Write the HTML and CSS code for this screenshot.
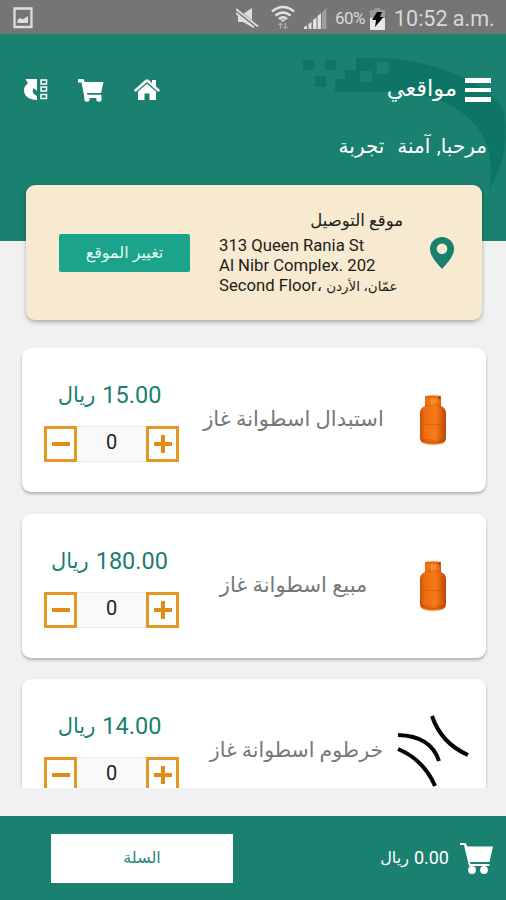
FILE: index.html
```html
<!DOCTYPE html>
<html lang="ar">
<head>
<meta charset="utf-8">
<title>مواقعي</title>
<link rel="stylesheet" href="styles.css">
</head>
<body>
<svg class="defs" width="0" height="0">
  <defs>
    <linearGradient id="tank" x1="0" x2="1" y1="0" y2="0">
      <stop offset="0" stop-color="#c85007"/><stop offset=".18" stop-color="#ee6d12"/>
      <stop offset=".6" stop-color="#f87b18"/><stop offset="1" stop-color="#bd4705"/>
    </linearGradient>
    <symbol id="cylinder" viewBox="0 0 26 50">
      <path fill="url(#tank)" d="M5 1q8-1.500 16 0v10q5 2 5 7v25q0 4-4 5.500-9 2.500-18 0-4-1.500-4-5.500V18q0-5 5-7z"/>
      <path d="M5 1.500q8 1 16 0M5 11q8-2 16 0M.5 29q12 1.500 25 0M1 44q12 3 24 0" fill="none" stroke="#b64404" stroke-width=".8" opacity=".45"/>
      <path d="M12 3v7M15 4v4" stroke="#ffb574" stroke-width="1.400" opacity=".6"/>
      <path d="M1.500 45q11 5 23 0" fill="none" stroke="#9c3a05" stroke-width="1" opacity=".6"/>
      <circle cx="19.500" cy="2.800" r="1" fill="#7d3512"/>
    </symbol>
  </defs>
</svg>

<div class="statusbar">
  <svg class="sb-photo" width="20" height="22" viewBox="0 0 20 22"><path d="M1.500 1.500h17v18.500h-17z" fill="none" stroke="#dedede" stroke-width="2.300"/><path d="M4.500 16v-3l3-2 2 1.500 5.500-3.500v7z" fill="#dedede"/></svg>
  <svg class="sb-mute" width="24" height="22" viewBox="0 0 24 22"><path d="M2 7h5l9-6v19l-9-5H2z" fill="#dedede"/><path d="M0 3.500l21 17" stroke="#757575" stroke-width="5"/><path d="M0 2l22 17.500M0 6l18 14.500" stroke="#dedede" stroke-width="1.800"/></svg>
  <svg class="sb-wifi" width="24" height="25" viewBox="0 0 24 25"><g fill="none" stroke="#e2e2e2" stroke-width="2.500"><path d="M1 6.500q11-9 22 0M4.500 10.500q7.500-6 15 0M8 14q4-3.500 8 0"/></g><path d="M9 14.500h6l-3 2.500z" fill="#e2e2e2"/><path d="M9.500 24v-6M7.500 20l2-2 2 2M14.500 17.500v6M12.500 21.500l2 2 2-2" fill="none" stroke="#adadad" stroke-width="1.200"/></svg>
  <svg class="sb-signal" width="23" height="22" viewBox="0 0 23 22"><path d="M0 21v-2l3-1.500V21zM4.500 21v-5l3-2v7zM9 21v-9l3.500-2.500V21zM13.500 21V8L17 5v16z" fill="#e2e2e2"/><path d="M18 21V4.500L22.500 0v21z" fill="#a0a0a0"/></svg>
  <span class="sb-percent">60%</span>
  <svg class="sb-battery" width="15" height="22" viewBox="0 0 15 22"><path d="M4.500 0h6v2H15v20H0V2h4.500z" fill="#999"/><path d="M0 10h15v12H0z" fill="#e8e8e8"/><path d="M7 4h5L10 9h3.500L5 19l1-7H2z" fill="#080808"/></svg>
  <span class="sb-time">10:52 a.m.</span>
</div>

<header class="header">
  <svg class="decor" width="206" height="180" viewBox="300 34 206 180"><g fill="#0d7566"><path d="M356 58Q412 56 455 74 492 88 504 112 511 154 489 190 496 152 477 127 448 92 390 92h-55V79h10v-9h11z"/><path d="M303 60h11v10h-11zM325 60h11v10h-11zM315 76h11v11h-11z"/></g><g fill="#1b806f"><path d="M360 71h12v11h-12zM377 62h12v12h-12z"/></g></svg>
  <div class="toolbar">
    <div class="actions">
      <svg width="24" height="22" viewBox="0 0 24 22"><path d="M1.500 0H13v12L9.500 9Q7 14.500 13 17v4Q0 20 0 11 0 7 4 4.500z" fill="#fff"/><path d="M17 1h5.500v4H17zM17 8h5.500v4H17zM17 15.500h5.500v4H17z" fill="none" stroke="#fff" stroke-width="1.500"/></svg>
      <svg width="26" height="23" viewBox="0 0 26 23"><path d="M0 0h5.500l1.200 3H25.500L23 14H9l.3 1.700h14V19H6.500L3.500 3.500H0z" fill="#fff"/><circle cx="9" cy="20" r="2.700" fill="#fff"/><circle cx="21" cy="20" r="2.700" fill="#fff"/></svg>
      <svg width="26" height="22" viewBox="0 0 26 22"><path d="M0 11 11.500.8q1.500-1.200 3 0L18 4V1h4v6.500l4 3.500-1.600 2L13 3 1.600 13z" fill="#fff"/><path d="M4 12.500 13 4.800l9 7.700V21h-6.500v-6.500h-5V21H4z" fill="#fff"/></svg>
    </div>
    <h1 class="title" dir="rtl">مواقعي</h1>
    <div class="burger"><i></i><i></i><i></i></div>
  </div>
  <p class="greeting" dir="rtl">مرحبا, آمنة&nbsp; تجربة</p>
</header>

<section class="address">
  <button class="change" dir="rtl">تغيير الموقع</button>
  <div class="place">
    <h2 class="place-title" dir="rtl">موقع التوصيل</h2>
    <p>313 Queen Rania St</p>
    <p>Al Nibr Complex. 202</p>
    <p class="mixed"><span>Second Floor،</span><span class="city" dir="rtl">عمّان، الأردن</span></p>
  </div>
  <svg class="pin" width="24" height="32" viewBox="0 0 24 32"><path fill="#18806e" fill-rule="evenodd" d="M12 0a12 12 0 0 1 12 12c0 7-6 13-12 20C6 25 0 19 0 12A12 12 0 0 1 12 0zm0 6.500a5.300 5.300 0 1 0 0 10.600 5.300 5.300 0 0 0 0-10.600z"/></svg>
</section>

<main class="list">
  <article class="item">
    <div class="buy">
      <div class="price"><span class="cur">ريال</span><span>15.00</span></div>
      <div class="stepper"><button class="step minus"></button><span>0</span><button class="step plus"></button></div>
    </div>
    <h3 class="name" dir="rtl">استبدال اسطوانة غاز</h3>
    <div class="thumb"><svg width="26" height="50"><use href="#cylinder"/></svg></div>
  </article>
  <article class="item">
    <div class="buy">
      <div class="price"><span class="cur">ريال</span><span>180.00</span></div>
      <div class="stepper"><button class="step minus"></button><span>0</span><button class="step plus"></button></div>
    </div>
    <h3 class="name" dir="rtl">مبيع اسطوانة غاز</h3>
    <div class="thumb"><svg width="26" height="50"><use href="#cylinder"/></svg></div>
  </article>
  <article class="item">
    <div class="buy">
      <div class="price"><span class="cur">ريال</span><span>14.00</span></div>
      <div class="stepper"><button class="step minus"></button><span>0</span><button class="step plus"></button></div>
    </div>
    <h3 class="name hose" dir="rtl">خرطوم اسطوانة غاز</h3>
    <div class="thumb"><svg width="72" height="72" viewBox="0 0 72 72"><g fill="none" stroke="#050505" stroke-width="4"><path d="M35 1q9 27 36 39M1 34q26 11 37 37"/><path d="M1 20q33 1 41 26"/></g></svg></div>
  </article>
</main>

<footer class="footer">
  <button class="basket" dir="rtl">السلة</button>
  <div class="total"><span class="cur">ريال</span><span>0.00</span></div>
  <svg class="cart" width="33" height="31" viewBox="0 0 33 31"><path d="M0 0h5.500l2 3.500H33L29.500 19H10l.5 2h19v2H9L4 2H0z" fill="#fff"/><circle cx="12" cy="27" r="3.900" fill="#fff"/><circle cx="24" cy="27" r="3.900" fill="#fff"/></svg>
</footer>
</body>
</html>
```
FILE: styles.css
```css
* { box-sizing: border-box; margin: 0; padding: 0; }
html, body { height: 900px; overflow: hidden; }
body {
  width: 506px;
  background: #f1f1f1;
  font-family: Roboto, "DejaVu Sans", sans-serif;
  display: flex;
  flex-direction: column;
}
h1, h2, h3 { font-weight: 400; white-space: nowrap; }
p { white-space: nowrap; }
button { border: 0; font: inherit; }
svg { display: block; flex: none; }
.defs { position: absolute; }

.statusbar { height: 34px; flex: none; background: #757575; color: #d9d9d9; display: flex; align-items: center; padding: 0 11px 0 13px; }
.sb-photo { margin-top: 1px; }
.sb-mute { margin: 2px 0 0 auto; }
.sb-wifi { margin-left: 11px; }
.sb-signal { margin: 3px 0 0 9px; }
.sb-percent { font-size: 17px; margin: 2px 0 0 8px; width: 31px; letter-spacing: -.5px; }
.sb-battery { margin: 3px 0 0 4px; }
.sb-time { font-size: 21.500px; width: 101px; margin: 3px 0 0 9px; white-space: nowrap; }

.header { position: relative; height: 207px; flex: none; background: #1a806f; color: #fff; padding-top: 34px; }
.decor { position: absolute; right: 0; top: 0; }
.toolbar { position: relative; display: flex; align-items: center; height: 44px; padding: 0 15px 0 24px; }
.actions { display: flex; align-items: center; gap: 30px; flex: 1; }
.title { font-size: 22.500px; line-height: 30px; margin-top: -5px; }
.burger { width: 26px; margin-left: 8px; display: grid; gap: 5px; }
.burger i { height: 4.500px; background: #fff; }
.greeting { position: relative; font-size: 20px; line-height: 24px; padding-right: 19px; margin-top: 22px; word-spacing: 1.500px; }

.address { position: relative; flex: none; width: 456px; height: 135px; margin: -56px 0 0 26px; background: #f7ead0; border-radius: 9px; box-shadow: 0 2px 4px rgba(0,0,0,.3); display: flex; align-items: center; padding: 0 28px 0 33px; }
.change { width: 131px; height: 38px; background: #1ba38b; color: #e4f8f3; border-radius: 2px; font-size: 16px; }
.place { width: 184px; margin: 1px 0 0 29px; font-size: 16.700px; line-height: 20px; color: #1c1c1a; }
.place-title { font-size: 16.500px; line-height: 22px; height: 26px; }
.mixed { display: flex; }
.city { font-size: 13.500px; margin-left: 4px; }
.pin { margin-left: auto; }

.list { flex: none; height: 448px; width: 474px; margin: 20px 0 0 17px; padding: 8px 5px 0; overflow: hidden; }
.item { width: 464px; height: 144px; margin-bottom: 21.500px; background: #fff; border-radius: 9px; box-shadow: 0 2px 3px rgba(0,0,0,.27); display: flex; align-items: center; padding: 0 17px 0 22px; }
.buy { width: 135px; align-self: flex-start; padding-top: 30px; }
.price { display: flex; justify-content: center; gap: 7px; font-size: 23.500px; line-height: 34px; height: 48px; color: #1c7f6d; padding-right: 4px; }
.price .cur { font-size: 21px; }
.stepper { display: flex; height: 36px; }
.stepper span { flex: 1; text-align: center; font-size: 20px; line-height: 30px; background: #f9f9f9; border: solid #eee; border-width: 1px 0; color: #222; }
.step { width: 33px; height: 36px; border: 3px solid #e39826; background: linear-gradient(#e38c15,#e38c15) center / 18px 4px no-repeat #fff; }
.plus { background: linear-gradient(#e38c15,#e38c15) center / 18px 4px no-repeat, linear-gradient(#e38c15,#e38c15) center / 4px 18px no-repeat #fff; }
.name { flex: 1; text-align: center; font-size: 21px; line-height: 28px; color: #777; margin-top: -2px; padding-left: 11px; }
.hose { font-size: 20.500px; padding-left: 17px; }
.thumb { width: 72px; display: flex; justify-content: center; }

.footer { flex: none; height: 84px; margin-top: 28px; background: #1a806f; color: #fff; display: flex; align-items: center; padding: 0 13px 0 51px; }
.basket { width: 182px; height: 49px; background: #fff; color: #2b8777; font-size: 16px; padding-bottom: 2px; }
.total { margin-left: auto; display: flex; gap: 5px; font-size: 18px; line-height: 24px; }
.total .cur { font-size: 16px; }
.cart { margin-left: 11px; }
```
